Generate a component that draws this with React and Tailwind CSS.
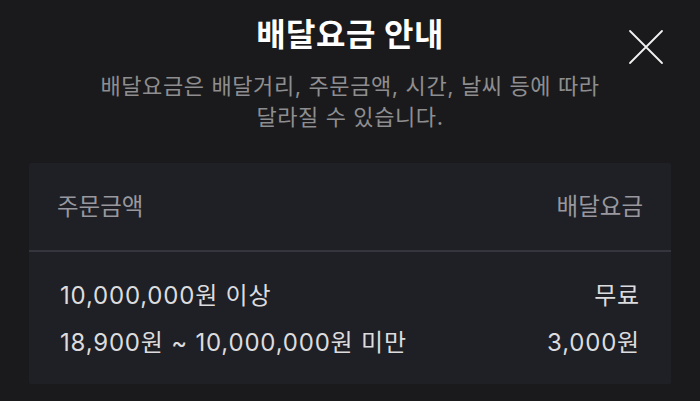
import React from "react";

const rows = [
    { range: "10,000,000원 이상", fee: "무료" },
    { range: "18,900원 ~ 10,000,000원 미만", fee: "3,000원" },
]

function CloseIcon() {
    return (
        <svg width="36" height="36" viewBox="0 0 36 36" fill="none">
            <path d="M2 2L34 34M34 2L2 34" stroke="#f2f2f2" strokeWidth="1.8" strokeLinecap="round" />
        </svg>
    )
}

function App() {
    return (
        <div className="w-[700px] h-[401px] bg-[#1a1a1c] overflow-hidden" style={{ fontFamily: 'Inter, "Noto Sans CJK KR", sans-serif' }}>
            <div className="relative pt-[15px]">
                <h1 className="text-center text-[32px] leading-[40px] font-bold text-white tracking-[0.5px]">배달요금 안내</h1>
                <button className="absolute top-[29px] right-[36px]">
                    <CloseIcon />
                </button>
            </div>

            <p className="mt-[16px] text-center text-[22px] leading-[31px] text-[#8e8e90] tracking-[0.6px]">
                배달요금은 배달거리, 주문금액, 시간, 날씨 등에 따라<br />
                달라질 수 있습니다.
            </p>

            <div className="mt-[30px] mx-[29px] bg-[#1f2026] rounded-[2px]">
                <div className="h-[87px] flex items-center justify-between px-[28px] text-[23.5px] text-[#98989e]">
                    <span>주문금액</span>
                    <span>배달요금</span>
                </div>
                <div className="h-[2px] bg-[#34353d]"></div>
                <div className="pt-[20px] pb-[18px] px-[31px] text-[24px] text-[#dcdcde] tracking-[0.8px]">
                    {rows.map((row) => (
                        <div key={row.range} className="flex justify-between leading-[47px]">
                            <span>{row.range}</span>
                            <span>{row.fee}</span>
                        </div>
                    ))}
                </div>
            </div>
        </div>
    )
}

export default App
